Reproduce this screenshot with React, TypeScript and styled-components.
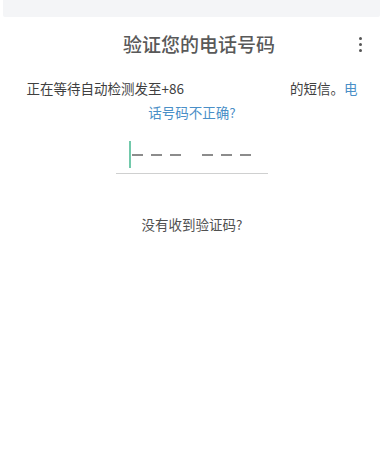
import React from "react";
import styled, { createGlobalStyle } from "styled-components";

const GlobalStyle = createGlobalStyle`
  html, body {
    margin: 0;
    padding: 0;
    background: #ffffff;
  }
  body {
    font-family: "Noto Sans CJK SC", "Noto Sans", sans-serif;
    color: #444;
  }
`;

const Page = styled.div`
  width: 384px;
  height: 457px;
  background: #fff;
  overflow: hidden;
`;

const StatusBar = styled.div`
  height: 17px;
  margin: 0 4px 0 3px;
  background: #f4f5f7;
  border-radius: 0 0 2px 2px;
`;

const Header = styled.header`
  display: grid;
  grid-template-columns: 1fr auto 1fr;
  align-items: center;
  height: 54px;
`;

const Title = styled.h1`
  grid-column: 2;
  margin: -2px 0 0 14px;
  font-size: 19px;
  font-weight: 500;
  color: #595959;
  letter-spacing: 0;
`;

const MenuButton = styled.div`
  justify-self: end;
  margin-right: 22px;
  display: flex;
  flex-direction: column;
  gap: 3px;
  padding-top: 1px;
`;

const Dot = styled.span`
  width: 3px;
  height: 3px;
  border-radius: 50%;
  background: #555;
`;

const Message = styled.p`
  margin: 5px 0 0;
  padding: 0 16px;
  text-align: center;
  font-size: 13.5px;
  line-height: 24px;
  color: #3f3f3f;
`;

const Hidden = styled.span`
  display: inline-block;
  width: 106px;
`;

const WrongLink = styled.a`
  color: #4a8fc7;
  text-decoration: none;
  font-size: 13.5px;
`;

const CodeField = styled.div`
  width: 139px;
  margin: 17px auto 0;
  height: 27px;
  padding: 0 0 5px 13px;
  display: flex;
  align-items: center;
  border-bottom: 1.5px solid #cfd0d0;
`;

const Cursor = styled.span`
  width: 2px;
  height: 27px;
  background: #72c9ab;
  margin-right: 1px;
`;

const Group = styled.div`
  display: flex;
  gap: 8px;
  & + & {
    margin-left: 21px;
  }
`;

const Dash = styled.span`
  width: 11px;
  height: 2px;
  background: #8c8c8c;
`;

const Resend = styled.p`
  margin: 40px 0 0;
  text-align: center;
  font-size: 13.5px;
  color: #505050;
`;

function CodeInput() {
  return (
    <CodeField>
      <Cursor />
      {[0, 1].map((g) => (
        <Group key={g}>
          <Dash />
          <Dash />
          <Dash />
        </Group>
      ))}
    </CodeField>
  );
}

export default function App() {
  return (
    <Page>
      <GlobalStyle />
      <StatusBar />
      <Header>
        <Title>验证您的电话号码</Title>
        <MenuButton>
          <Dot />
          <Dot />
          <Dot />
        </MenuButton>
      </Header>
      <Message>
        正在等待自动检测发至+86
        <Hidden />
        的短信。<WrongLink href="#">电<br />话号码不正确?</WrongLink>
      </Message>
      <CodeInput />
      <Resend>没有收到验证码?</Resend>
    </Page>
  );
}
